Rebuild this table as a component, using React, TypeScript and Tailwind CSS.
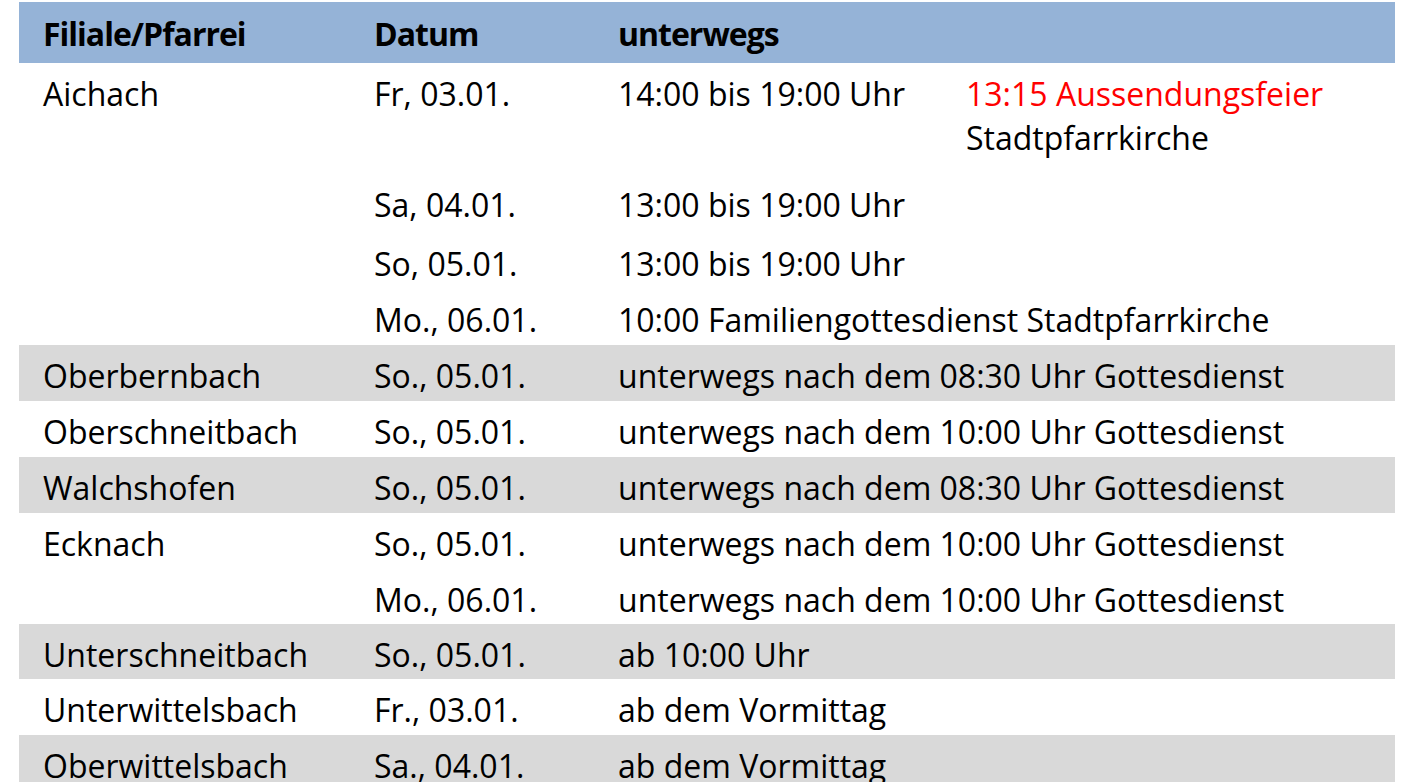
type Sub = { date: string; text: React.ReactNode; h: string };
type Row = { name: string; gray: boolean; subs: Sub[] };

const rows: Row[] = [
  {
    name: "Aichach",
    gray: false,
    subs: [
      {
        date: "Fr, 03.01.",
        h: "h-[111px]",
        text: (
          <div className="flex">
            <div className="w-[348px] shrink-0">14:00 bis 19:00 Uhr</div>
            <div>
              <div className="text-[#ff0000]">13:15 Aussendungsfeier</div>
              <div>Stadtpfarrkirche</div>
            </div>
          </div>
        ),
      },
      { date: "Sa, 04.01.", h: "h-[59px]", text: "13:00 bis 19:00 Uhr" },
      { date: "So, 05.01.", h: "h-[56px]", text: "13:00 bis 19:00 Uhr" },
      { date: "Mo., 06.01.", h: "h-[56px]", text: "10:00 Familiengottesdienst Stadtpfarrkirche" },
    ],
  },
  { name: "Oberbernbach", gray: true, subs: [{ date: "So., 05.01.", h: "h-[56px]", text: "unterwegs nach dem 08:30 Uhr Gottesdienst" }] },
  { name: "Oberschneitbach", gray: false, subs: [{ date: "So., 05.01.", h: "h-[56px]", text: "unterwegs nach dem 10:00 Uhr Gottesdienst" }] },
  { name: "Walchshofen", gray: true, subs: [{ date: "So., 05.01.", h: "h-[56px]", text: "unterwegs nach dem 08:30 Uhr Gottesdienst" }] },
  {
    name: "Ecknach",
    gray: false,
    subs: [
      { date: "So., 05.01.", h: "h-[56px]", text: "unterwegs nach dem 10:00 Uhr Gottesdienst" },
      { date: "Mo., 06.01.", h: "h-[55px]", text: "unterwegs nach dem 10:00 Uhr Gottesdienst" },
    ],
  },
  { name: "Unterschneitbach", gray: true, subs: [{ date: "So., 05.01.", h: "h-[55px]", text: "ab 10:00 Uhr" }] },
  { name: "Unterwittelsbach", gray: false, subs: [{ date: "Fr., 03.01.", h: "h-[56px]", text: "ab dem Vormittag" }] },
  { name: "Oberwittelsbach", gray: true, subs: [{ date: "Sa., 04.01.", h: "h-[56px]", text: "ab dem Vormittag" }] },
];

export default function App() {
  return (
    <div className="h-[782px] overflow-hidden bg-white pt-[2px] pl-[19px] font-['Open_Sans',sans-serif] text-[32px] leading-[44px] text-black">
      <div className="w-[1376px]">
        {/* header */}
        <div className="flex h-[61px] bg-[#95b3d7] pt-[10px] font-bold tracking-[-1px]">
          <div className="w-[331px] shrink-0 pl-6">Filiale/Pfarrei</div>
          <div className="w-[244px] shrink-0 pl-6">Datum</div>
          <div className="pl-6">unterwegs</div>
        </div>

        {rows.map((r) => (
          <div key={r.name} className={`flex ${r.gray ? "bg-[#d9d9d9]" : "bg-white"}`}>
            <div className="w-[331px] shrink-0 pt-[9px] pl-6 whitespace-nowrap">{r.name}</div>
            <div className="flex-1">
              {r.subs.map((s, i) => (
                <div key={i} className={`flex ${s.h} pt-[9px]`}>
                  <div className="w-[244px] shrink-0 pl-6 whitespace-nowrap">{s.date}</div>
                  <div className="flex-1 pl-6 whitespace-nowrap">{s.text}</div>
                </div>
              ))}
            </div>
          </div>
        ))}
      </div>
    </div>
  );
}
